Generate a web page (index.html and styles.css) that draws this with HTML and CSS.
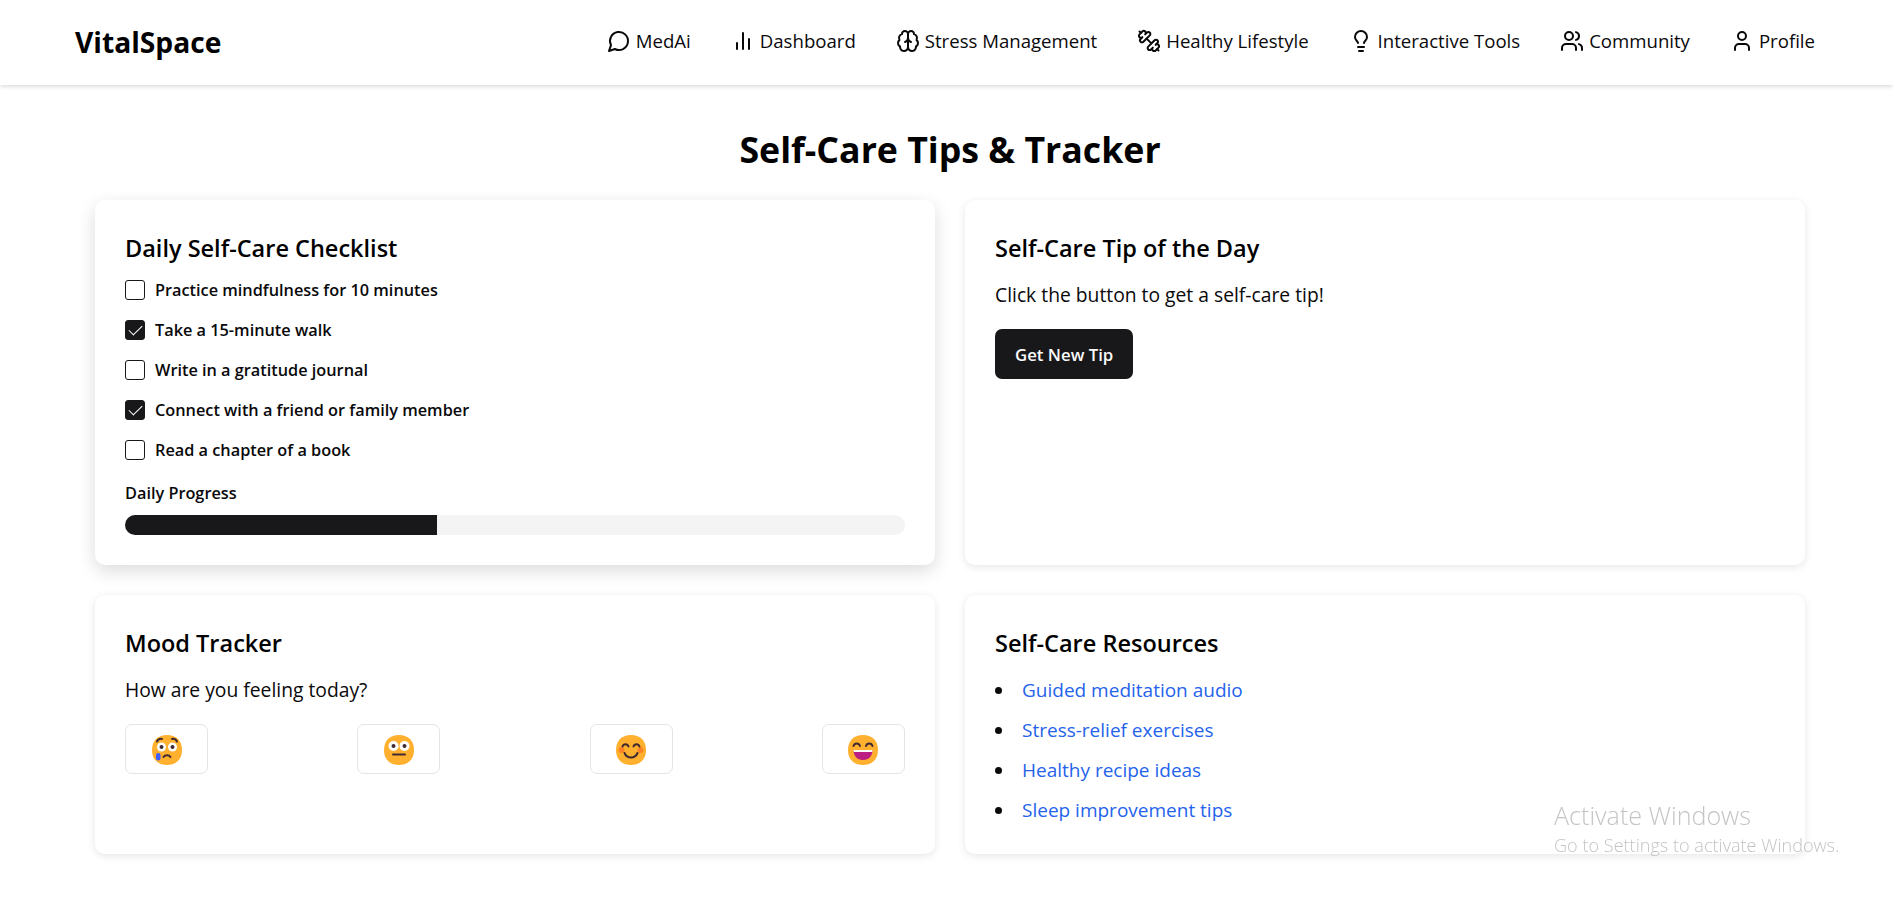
FILE: index.html
```html
<!DOCTYPE html>
<html lang="en">
<head>
<meta charset="UTF-8">
<meta name="viewport" content="width=device-width, initial-scale=1.0">
<title>VitalSpace - Self-Care Tips &amp; Tracker</title>
<link rel="stylesheet" href="styles.css">
</head>
<body>
<header class="topbar">
    <a class="logo" href="#">VitalSpace</a>
    <nav class="nav">
        <a class="nav-link" href="#">
            <svg class="icon" viewBox="0 0 24 24"><path d="M7.9 20A9 9 0 1 0 4 16.1L2 22Z"/></svg>
            MedAi
        </a>
        <a class="nav-link" href="#">
            <svg class="icon" viewBox="0 0 24 24"><line x1="18" y1="20" x2="18" y2="10"/><line x1="12" y1="20" x2="12" y2="4"/><line x1="6" y1="20" x2="6" y2="14"/></svg>
            Dashboard
        </a>
        <a class="nav-link" href="#">
            <svg class="icon" viewBox="0 0 24 24"><path d="M12 5a3 3 0 1 0-5.997.125 4 4 0 0 0-2.526 5.77 4 4 0 0 0 .556 6.588A4 4 0 1 0 12 18Z"/><path d="M12 5a3 3 0 1 1 5.997.125 4 4 0 0 1 2.526 5.77 4 4 0 0 1-.556 6.588A4 4 0 1 1 12 18Z"/><path d="M15 13a4.5 4.5 0 0 1-3-4 4.5 4.5 0 0 1-3 4"/></svg>
            Stress Management
        </a>
        <a class="nav-link" href="#">
            <svg class="icon" viewBox="0 0 24 24"><path d="M14.4 14.4 9.6 9.6"/><path d="M18.657 21.485a2 2 0 1 1-2.829-2.828l-1.767 1.768a2 2 0 1 1-2.829-2.829l6.364-6.364a2 2 0 1 1 2.829 2.829l-1.768 1.767a2 2 0 1 1 2.828 2.829z"/><path d="m21.5 21.5-1.4-1.4"/><path d="M3.9 3.9 2.5 2.5"/><path d="M6.404 12.768a2 2 0 1 1-2.829-2.829l1.768-1.767a2 2 0 1 1-2.828-2.829l2.828-2.828a2 2 0 1 1 2.829 2.828l1.767-1.768a2 2 0 1 1 2.829 2.829z"/></svg>
            Healthy Lifestyle
        </a>
        <a class="nav-link" href="#">
            <svg class="icon" viewBox="0 0 24 24"><path d="M15 14c.2-1 .7-1.7 1.5-2.5 1-.9 1.5-2.2 1.5-3.5A6 6 0 0 0 6 8c0 1 .2 2.2 1.5 3.5.7.7 1.3 1.5 1.5 2.5"/><path d="M9 18h6"/><path d="M10 22h4"/></svg>
            Interactive Tools
        </a>
        <a class="nav-link" href="#">
            <svg class="icon" viewBox="0 0 24 24"><path d="M16 21v-2a4 4 0 0 0-4-4H6a4 4 0 0 0-4 4v2"/><circle cx="9" cy="7" r="4"/><path d="M22 21v-2a4 4 0 0 0-3-3.87"/><path d="M16 3.13a4 4 0 0 1 0 7.75"/></svg>
            Community
        </a>
        <a class="nav-link" href="#">
            <svg class="icon" viewBox="0 0 24 24"><path d="M19 21v-2a4 4 0 0 0-4-4H9a4 4 0 0 0-4 4v2"/><circle cx="12" cy="7" r="4"/></svg>
            Profile
        </a>
    </nav>
</header>

<main class="page">
    <h1 class="page-title">Self-Care Tips &amp; Tracker</h1>
    <div class="cards">
        <section class="card card-hover">
            <h2 class="card-title">Daily Self-Care Checklist</h2>
            <div class="checklist">
                <label class="check-row"><input type="checkbox"> Practice mindfulness for 10 minutes</label>
                <label class="check-row"><input type="checkbox" checked> Take a 15-minute walk</label>
                <label class="check-row"><input type="checkbox"> Write in a gratitude journal</label>
                <label class="check-row"><input type="checkbox" checked> Connect with a friend or family member</label>
                <label class="check-row"><input type="checkbox"> Read a chapter of a book</label>
            </div>
            <div class="progress-label">Daily Progress</div>
            <div class="progress"><div class="progress-fill" style="width: 40%"></div></div>
        </section>

        <section class="card">
            <h2 class="card-title">Self-Care Tip of the Day</h2>
            <p class="card-text">Click the button to get a self-care tip!</p>
            <button class="tip-btn">Get New Tip</button>
        </section>

        <section class="card">
            <h2 class="card-title">Mood Tracker</h2>
            <p class="card-text">How are you feeling today?</p>
            <div class="moods">
                <button class="mood-btn" aria-label="Sad">
                    <svg class="emoji" viewBox="0 0 32 32">
                        <path class="face" d="M16 1C26 1 31 7.500 31 16S26 31 16 31 1 24.500 1 16 6 1 16 1Z"/>
                        <circle class="eye-white" cx="10.500" cy="13" r="4.500"/><circle class="eye-white" cx="21.500" cy="13" r="4.500"/>
                        <circle class="pupil" cx="10.500" cy="13" r="2"/><circle class="pupil" cx="21.500" cy="13" r="2"/>
                        <path class="feature" d="M6 7.500C7 5.500 9 4.500 11 5M26 7.500C25 5.500 23 4.500 21 5M12.500 23C14 20.500 18 20.500 19.500 23"/>
                        <rect class="tear" x="5" y="19" width="4.500" height="7.500" rx="2.200"/>
                    </svg>
                </button>
                <button class="mood-btn" aria-label="Neutral">
                    <svg class="emoji" viewBox="0 0 32 32">
                        <path class="face" d="M16 1C26 1 31 7.500 31 16S26 31 16 31 1 24.500 1 16 6 1 16 1Z"/>
                        <circle class="eye-white" cx="10.500" cy="12" r="5"/><circle class="eye-white" cx="21.500" cy="12" r="5"/>
                        <circle class="pupil" cx="10.500" cy="12" r="2"/><circle class="pupil" cx="21.500" cy="12" r="2"/>
                        <path class="feature" d="M10 20.500H22"/>
                    </svg>
                </button>
                <button class="mood-btn" aria-label="Happy">
                    <svg class="emoji" viewBox="0 0 32 32">
                        <path class="face" d="M16 1C26 1 31 7.500 31 16S26 31 16 31 1 24.500 1 16 6 1 16 1Z"/>
                        <circle class="blush" cx="6.500" cy="16" r="3"/><circle class="blush" cx="25.500" cy="16" r="3"/>
                        <path class="feature" d="M7.500 12.500C8.500 9.500 12.500 9.500 13.500 12.500M18.500 12.500C19.500 9.500 23.500 9.500 24.500 12.500M9.500 19C12 25 20 25 22.500 19"/>
                    </svg>
                </button>
                <button class="mood-btn" aria-label="Very happy">
                    <svg class="emoji" viewBox="0 0 32 32">
                        <path class="face" d="M16 1C26 1 31 7.500 31 16S26 31 16 31 1 24.500 1 16 6 1 16 1Z"/>
                        <path class="feature" d="M6.500 12C7.500 8.500 12 8.500 13 12M19 12C20 8.500 24.500 8.500 25.500 12"/>
                        <path class="mouth" d="M6.500 16H25.500C25.500 22 22 26 16 26S6.500 22 6.500 16Z"/>
                        <path class="teeth" d="M6.500 16H25.500C25.500 16.700 25.400 17.300 25.300 18H6.700C6.600 17.300 6.500 16.700 6.500 16Z"/>
                    </svg>
                </button>
            </div>
        </section>

        <section class="card">
            <h2 class="card-title">Self-Care Resources</h2>
            <ul class="resources">
                <li><a href="#">Guided meditation audio</a></li>
                <li><a href="#">Stress-relief exercises</a></li>
                <li><a href="#">Healthy recipe ideas</a></li>
                <li><a href="#">Sleep improvement tips</a></li>
            </ul>
        </section>
    </div>
</main>

<div class="activate">
    <div class="activate-title">Activate Windows</div>
    <div class="activate-sub">Go to Settings to activate Windows.</div>
</div>
</body>
</html>
```

FILE: styles.css
```css
* {
    box-sizing: border-box;
}
body {
    margin: 0;
    font-family: "Open Sans", "Noto Sans", sans-serif;
    background-color: #fff;
    color: #09090b;
}
a {
    color: inherit;
    text-decoration: none;
}

/* top bar */
.topbar {
    height: 85px;
    display: flex;
    justify-content: space-between;
    align-items: center;
    padding: 0 78px 0 75px;
    background-color: #fff;
    box-shadow: 0 1px 5px rgba(0, 0, 0, 0.18);
}
.logo {
    margin-bottom: 2px;
    font-size: 28.200px;
    font-weight: 700;
    color: #000;
}
.nav {
    display: flex;
    gap: 40px;
    margin-bottom: 4px;
}
.nav-link {
    display: flex;
    align-items: center;
    gap: 5px;
    font-size: 18.600px;
    line-height: 25px;
    color: #09090b;
}
.icon {
    width: 24px;
    height: 24px;
    fill: none;
    stroke: currentColor;
    stroke-width: 2;
    stroke-linecap: round;
    stroke-linejoin: round;
}

/* page */
.page {
    padding: 0 88px 40px 95px;
}
.page-title {
    margin: 0;
    padding: 40px 0 27px;
    height: 115px;
    font-size: 35.700px;
    line-height: 48px;
    font-weight: 700;
    text-align: center;
    color: #000;
}
.cards {
    display: grid;
    grid-template-columns: 1fr 1fr;
    gap: 30px;
}
.card {
    padding: 30px;
    border-radius: 10px;
    background-color: #fff;
    box-shadow: 0 2px 8px rgba(0, 0, 0, 0.1);
}
.card-hover {
    box-shadow: 0 6px 18px rgba(0, 0, 0, 0.14);
}
.card-title {
    margin: 1px 0 0;
    font-size: 23.500px;
    line-height: 35px;
    font-weight: 600;
    color: #000;
}
.card-text {
    margin: 15px 0 0;
    font-size: 19.300px;
    line-height: 28px;
}

/* checklist */
.checklist {
    display: flex;
    flex-direction: column;
    gap: 15px;
    margin-top: 11px;
}
.check-row {
    display: flex;
    align-items: center;
    gap: 10px;
    height: 25px;
    font-size: 16.300px;
    font-weight: 600;
}
.check-row input {
    appearance: none;
    position: relative;
    width: 20px;
    height: 20px;
    margin: 0;
    border: 1px solid #18181b;
    border-radius: 3px;
    background-color: #fff;
}
.check-row input:checked {
    background-color: #18181b;
}
.check-row input:checked::after {
    content: "";
    position: absolute;
    left: 5.800px;
    top: 1.600px;
    width: 6px;
    height: 12px;
    border: solid #fff;
    border-width: 0 1.500px 1.500px 0;
    transform: rotate(45deg);
}
.progress-label {
    margin-top: 20px;
    font-size: 16.300px;
    line-height: 22px;
    font-weight: 600;
}
.progress {
    height: 20px;
    margin-top: 11px;
    border-radius: 10px;
    overflow: hidden;
    background-color: #f4f4f5;
}
.progress-fill {
    height: 100%;
    background-color: #18181b;
}

/* tip */
.tip-btn {
    display: block;
    height: 50px;
    margin-top: 20px;
    padding: 0 20px;
    border: none;
    border-radius: 7px;
    font-family: inherit;
    font-size: 16.800px;
    font-weight: 600;
    color: #fafafa;
    background-color: #18181b;
}

/* mood */
.moods {
    display: flex;
    justify-content: space-between;
    margin-top: 20px;
}
.mood-btn {
    display: flex;
    justify-content: center;
    align-items: center;
    width: 83px;
    height: 50px;
    padding: 0;
    border: 1px solid #e4e4e7;
    border-radius: 7px;
    background-color: #fff;
}
.emoji {
    display: block;
    width: 32px;
    height: 32px;
    margin-top: 2px;
}
.face { fill: #ffb02e; }
.eye-white { fill: #fff; }
.pupil { fill: #402a32; }
.feature {
    fill: none;
    stroke: #402a32;
    stroke-width: 2;
    stroke-linecap: round;
}
.tear { fill: #3f5fff; }
.blush { fill: #ff6723; opacity: 0.6; }
.mouth { fill: #bb1d80; }
.teeth { fill: #fff; }

/* resources */
.resources {
    display: flex;
    flex-direction: column;
    gap: 12px;
    margin: 15px 0 0;
    padding: 0;
    list-style: none;
    font-size: 19px;
    line-height: 28px;
}
.resources li {
    display: flex;
    align-items: center;
    gap: 20px;
}
.resources li::before {
    content: "";
    width: 7px;
    height: 7px;
    border-radius: 50%;
    background-color: #09090b;
}
.resources a {
    color: #2563eb;
}

/* windows watermark */
.activate {
    position: fixed;
    left: 1554px;
    top: 798px;
    color: #c4c4c4;
    font-weight: 300;
    pointer-events: none;
}
.activate-title {
    font-size: 25.100px;
    line-height: 35px;
}
.activate-sub {
    font-size: 18.100px;
    line-height: 24px;
}
```
